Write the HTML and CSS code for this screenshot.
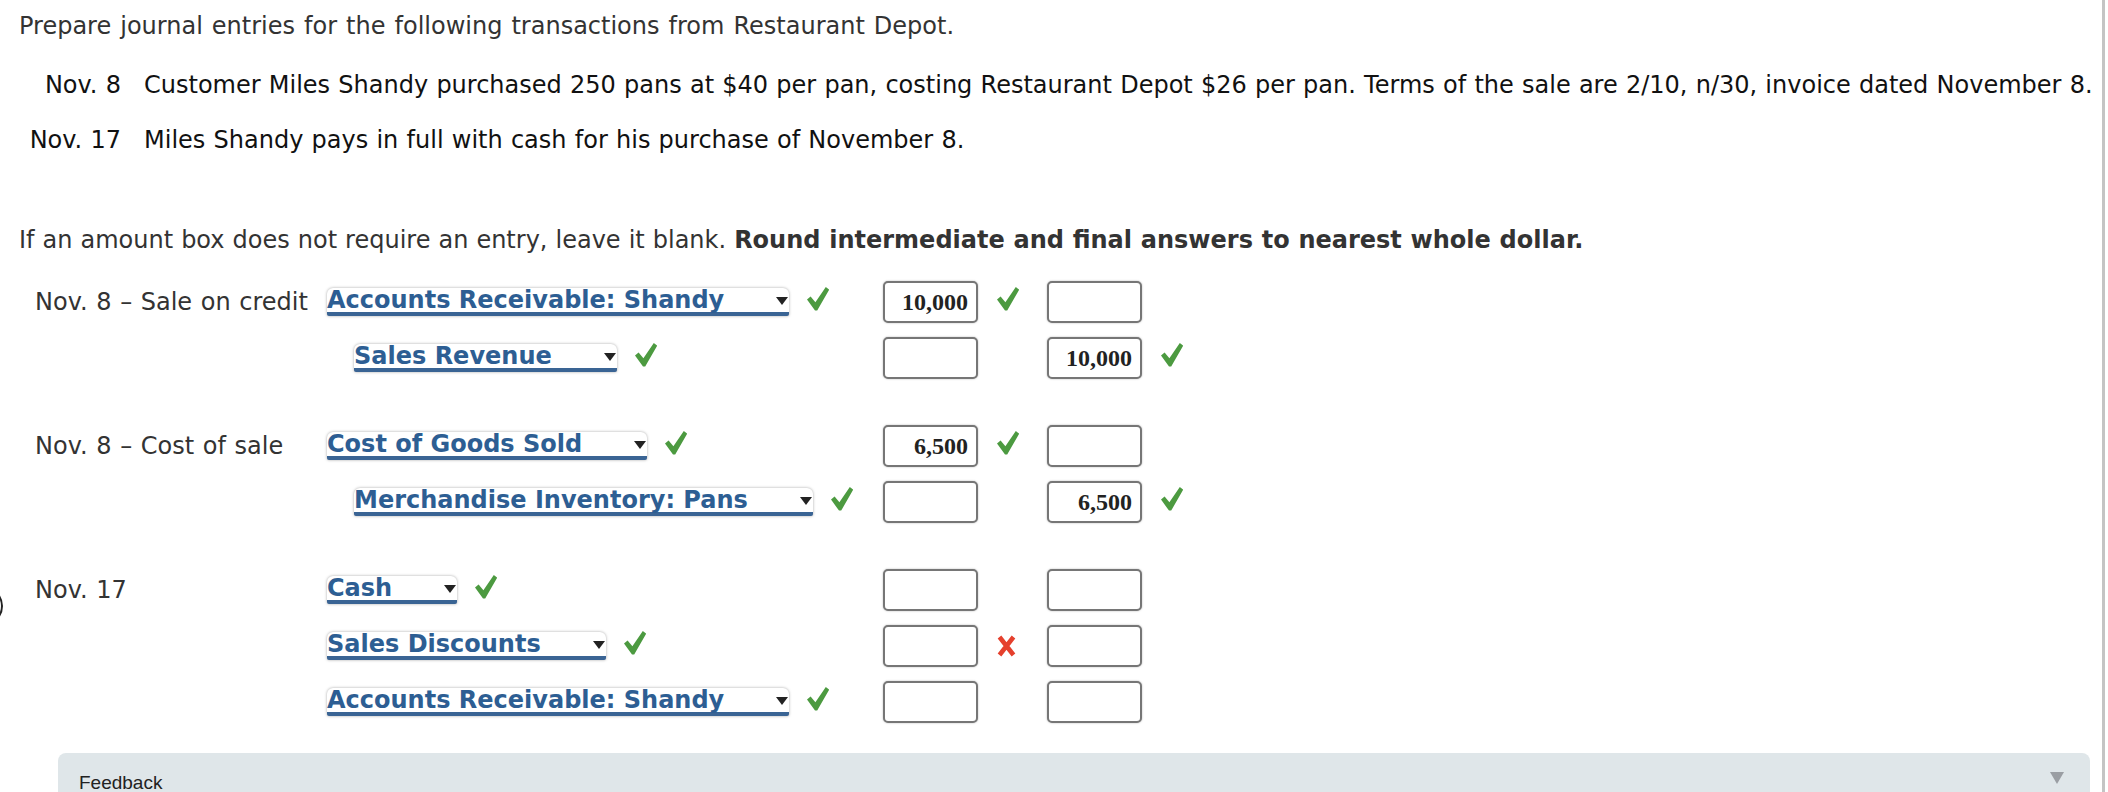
FILE: index.html
```html
<!DOCTYPE html>
<html lang="en">
<head>
<meta charset="utf-8">
<title>Journal entries</title>
<link rel="stylesheet" href="styles.css">
</head>
<body>
<div class="page">
  <span class="edge-arc"></span>
  <span class="edge-line"></span>

  <p class="intro">Prepare journal entries for the following transactions from Restaurant Depot.</p>

  <div class="trans">
    <div class="date">Nov. 8</div>
    <div class="desc">Customer Miles Shandy purchased 250 pans at $40 per pan, costing Restaurant Depot $26 per pan. Terms of the sale are 2/10, n/30, invoice dated November 8.</div>
    <div class="date">Nov. 17</div>
    <div class="desc">Miles Shandy pays in full with cash for his purchase of November 8.</div>
  </div>

  <p class="instr">If an amount box does not require an entry, leave it blank. <b>Round intermediate and final answers to nearest whole dollar.</b></p>

  <div class="journal">
    <div class="group">
      <div class="label">Nov. 8 – Sale on credit</div>
      <div class="acct"><span class="sel"><span class="sel-text">Accounts Receivable: Shandy</span><span class="arrow"></span></span><svg class="ok" viewBox="0 0 22 24"><path d="M0 12.5 L3.6 9.6 L8.4 15.2 L18.8 0 L22.3 2.6 L10.2 23.6 L8 23.6 Z"/></svg></div>
      <div class="box">10,000</div>
      <div class="mark"><svg class="ok" viewBox="0 0 22 24"><path d="M0 12.5 L3.6 9.6 L8.4 15.2 L18.8 0 L22.3 2.6 L10.2 23.6 L8 23.6 Z"/></svg></div>
      <div class="box"></div>
      <div class="mark"></div>

      <div class="label"></div>
      <div class="acct indent"><span class="sel"><span class="sel-text">Sales Revenue</span><span class="arrow"></span></span><svg class="ok" viewBox="0 0 22 24"><path d="M0 12.5 L3.6 9.6 L8.4 15.2 L18.8 0 L22.3 2.6 L10.2 23.6 L8 23.6 Z"/></svg></div>
      <div class="box"></div>
      <div class="mark"></div>
      <div class="box">10,000</div>
      <div class="mark"><svg class="ok" viewBox="0 0 22 24"><path d="M0 12.5 L3.6 9.6 L8.4 15.2 L18.8 0 L22.3 2.6 L10.2 23.6 L8 23.6 Z"/></svg></div>
    </div>

    <div class="group">
      <div class="label">Nov. 8 – Cost of sale</div>
      <div class="acct"><span class="sel"><span class="sel-text">Cost of Goods Sold</span><span class="arrow"></span></span><svg class="ok" viewBox="0 0 22 24"><path d="M0 12.5 L3.6 9.6 L8.4 15.2 L18.8 0 L22.3 2.6 L10.2 23.6 L8 23.6 Z"/></svg></div>
      <div class="box">6,500</div>
      <div class="mark"><svg class="ok" viewBox="0 0 22 24"><path d="M0 12.5 L3.6 9.6 L8.4 15.2 L18.8 0 L22.3 2.6 L10.2 23.6 L8 23.6 Z"/></svg></div>
      <div class="box"></div>
      <div class="mark"></div>

      <div class="label"></div>
      <div class="acct indent"><span class="sel"><span class="sel-text">Merchandise Inventory: Pans</span><span class="arrow"></span></span><svg class="ok" viewBox="0 0 22 24"><path d="M0 12.5 L3.6 9.6 L8.4 15.2 L18.8 0 L22.3 2.6 L10.2 23.6 L8 23.6 Z"/></svg></div>
      <div class="box"></div>
      <div class="mark"></div>
      <div class="box">6,500</div>
      <div class="mark"><svg class="ok" viewBox="0 0 22 24"><path d="M0 12.5 L3.6 9.6 L8.4 15.2 L18.8 0 L22.3 2.6 L10.2 23.6 L8 23.6 Z"/></svg></div>
    </div>

    <div class="group">
      <div class="label">Nov. 17</div>
      <div class="acct"><span class="sel"><span class="sel-text">Cash</span><span class="arrow"></span></span><svg class="ok" viewBox="0 0 22 24"><path d="M0 12.5 L3.6 9.6 L8.4 15.2 L18.8 0 L22.3 2.6 L10.2 23.6 L8 23.6 Z"/></svg></div>
      <div class="box"></div>
      <div class="mark"></div>
      <div class="box"></div>
      <div class="mark"></div>

      <div class="label"></div>
      <div class="acct"><span class="sel"><span class="sel-text">Sales Discounts</span><span class="arrow"></span></span><svg class="ok" viewBox="0 0 22 24"><path d="M0 12.5 L3.6 9.6 L8.4 15.2 L18.8 0 L22.3 2.6 L10.2 23.6 L8 23.6 Z"/></svg></div>
      <div class="box"></div>
      <div class="mark"><svg class="bad" viewBox="0 0 19 22"><path d="M2.5 2 L16.5 20 M16.5 2 L2.5 20"/></svg></div>
      <div class="box"></div>
      <div class="mark"></div>

      <div class="label"></div>
      <div class="acct"><span class="sel"><span class="sel-text">Accounts Receivable: Shandy</span><span class="arrow"></span></span><svg class="ok" viewBox="0 0 22 24"><path d="M0 12.5 L3.6 9.6 L8.4 15.2 L18.8 0 L22.3 2.6 L10.2 23.6 L8 23.6 Z"/></svg></div>
      <div class="box"></div>
      <div class="mark"></div>
      <div class="box"></div>
      <div class="mark"></div>
    </div>
  </div>

  <div class="feedback">
    <span class="fb-title">Feedback</span>
    <span class="fb-toggle"></span>
  </div>
</div>
</body>
</html>
```

FILE: styles.css
```css
html, body {
  margin: 0;
  padding: 0;
  background: #ffffff;
}

body {
  width: 2108px;
  height: 792px;
  overflow: hidden;
  font-family: "DejaVu Sans", Verdana, sans-serif;
  font-size: 24px;
  line-height: 28px;
  color: #333333;
}

.page {
  position: relative;
  height: 792px;
  overflow: hidden;
}

.edge-line {
  position: absolute;
  top: 0;
  left: 2102px;
  width: 3px;
  height: 792px;
  background: #c4c4c4;
}

.edge-arc {
  position: absolute;
  left: -37px;
  top: 586px;
  width: 36px;
  height: 36px;
  border: 2px solid #222222;
  border-radius: 50%;
}

.intro {
  margin: 12px 0 0 19px;
  white-space: nowrap;
  word-spacing: 1.4px;
}

.trans {
  display: grid;
  grid-template-columns: 101px auto;
  column-gap: 23px;
  row-gap: 27px;
  margin: 31px 0 0 20px;
  color: #111111;
  white-space: nowrap;
  word-spacing: 0.6px;
}

.date {
  text-align: right;
}

.instr {
  margin: 72px 0 0 19px;
  white-space: nowrap;
  word-spacing: 0.4px;
}

.instr b {
  font-weight: bold;
}

.journal {
  margin: 20px 0 0 35px;
  display: flex;
  flex-direction: column;
  gap: 32px;
}

.group {
  display: grid;
  grid-template-columns: 292px 556px 95px 69px 95px 60px;
  grid-auto-rows: 56px;
  align-items: center;
}

.label {
  white-space: nowrap;
  word-spacing: 1px;
}

.acct {
  display: flex;
  align-items: center;
  gap: 18px;
}

.acct.indent {
  padding-left: 27px;
}

.sel {
  display: inline-flex;
  align-items: flex-start;
  height: 28px;
  box-sizing: border-box;
  background: #ffffff;
  border-bottom: 4px solid #3a6494;
  border-radius: 6px 6px 2px 2px;
  box-shadow: 0 0 3px rgba(0, 0, 0, 0.35);
  padding-right: 1px;
}

.sel-text {
  font-weight: bold;
  color: #2d5e93;
  line-height: 24px;
  white-space: nowrap;
}

.arrow {
  width: 0;
  height: 0;
  margin: 9px 0 0 52px;
  border-left: 6px solid transparent;
  border-right: 6px solid transparent;
  border-top: 8px solid #222222;
}

.ok {
  width: 22px;
  height: 24px;
  fill: #4c9a40;
  margin-bottom: 6px;
  flex: none;
}

.bad {
  width: 19px;
  height: 22px;
  stroke: #e5402d;
  stroke-width: 4.6;
  fill: none;
}

.box {
  height: 42px;
  box-sizing: border-box;
  border: 2px solid #767676;
  border-radius: 5px;
  box-shadow: 0 0 2px rgba(0, 0, 0, 0.3);
  background: #ffffff;
  font-family: "Liberation Serif", "Times New Roman", serif;
  font-weight: bold;
  font-size: 24px;
  line-height: 38px;
  color: #222222;
  text-align: right;
  padding-right: 8px;
}

.mark {
  display: flex;
  align-items: center;
  padding-left: 19px;
}

.feedback {
  position: relative;
  margin: 23px 0 0 58px;
  width: 2032px;
  height: 39px;
  background: #dfe6e9;
  border-radius: 8px 8px 0 0;
  box-sizing: border-box;
  padding: 20px 0 0 21px;
}

.fb-title {
  display: block;
  font-family: "Liberation Sans", Arial, sans-serif;
  font-size: 19px;
  line-height: 19px;
  color: #222222;
}

.fb-toggle {
  position: absolute;
  right: 26px;
  top: 19px;
  width: 0;
  height: 0;
  border-left: 7px solid transparent;
  border-right: 7px solid transparent;
  border-top: 12px solid #9a9ea3;
}
```
